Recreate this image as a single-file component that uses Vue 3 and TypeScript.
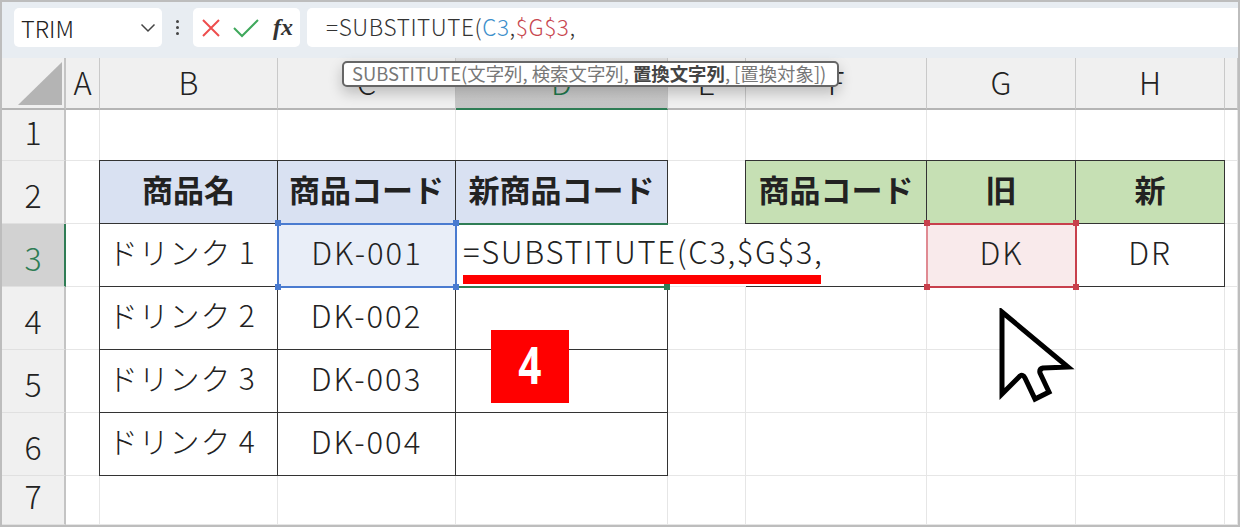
<script setup lang="ts">
const cols = ['A', 'B', 'C', 'D', 'E', 'F', 'G', 'H', '']

type Cell = { t?: string; c?: string }
const empty = (): Cell[] => Array.from({ length: 9 }, () => ({}))
const rows: { n: number; cells: Cell[] }[] = [
  { n: 1, cells: empty() },
  {
    n: 2,
    cells: [
      {},
      { t: '商品名', c: 'tb hb' },
      { t: '商品コード', c: 'tb hb' },
      { t: '新商品コード', c: 'tb hb' },
      {},
      { t: '商品コード', c: 'tb hg' },
      { t: '旧', c: 'tb hg' },
      { t: '新', c: 'tb hg' },
      {},
    ],
  },
  {
    n: 3,
    cells: [
      {},
      { t: 'ドリンク 1', c: 'tb item' },
      { t: 'DK-001', c: 'tb sel-blue' },
      { c: 'editing' },
      { c: 'over' },
      { c: 'over-end' },
      { t: 'DK', c: 'tb sel-red' },
      { t: 'DR', c: 'tb' },
      {},
    ],
  },
  { n: 4, cells: [{}, { t: 'ドリンク 2', c: 'tb item' }, { t: 'DK-002', c: 'tb' }, { c: 'tb' }, {}, {}, {}, {}, {}] },
  { n: 5, cells: [{}, { t: 'ドリンク 3', c: 'tb item' }, { t: 'DK-003', c: 'tb' }, { c: 'tb' }, {}, {}, {}, {}, {}] },
  { n: 6, cells: [{}, { t: 'ドリンク 4', c: 'tb item' }, { t: 'DK-004', c: 'tb' }, { c: 'tb' }, {}, {}, {}, {}, {}] },
  { n: 7, cells: empty() },
]
</script>

<template>
  <div class="frame">
    <header class="fbar">
      <div class="namebox">
        <span class="name">TRIM</span>
        <svg class="chev" width="16" height="10" viewBox="0 0 16 10"><path d="M1.5 1.5 8 8l6.5-6.5" fill="none" stroke="#444" stroke-width="1.5" /></svg>
      </div>
      <div class="dots"><i></i><i></i><i></i></div>
      <div class="fxbox">
        <svg width="20" height="20" viewBox="0 0 20 20"><path d="M2 2l16 16M18 2 2 18" fill="none" stroke="#ee4d4d" stroke-width="2" /></svg>
        <svg width="26" height="20" viewBox="0 0 26 20"><path d="M1 10l8 8L25 2" fill="none" stroke="#3fa85c" stroke-width="2" /></svg>
        <span class="fx">fx</span>
      </div>
      <div class="finput">=SUBSTITUTE(<span class="blue">C3</span>,<span class="red">$G$3</span>,</div>
    </header>

    <div class="sheet">
      <div class="corner"><span class="tri"></span></div>
      <div v-for="c in cols" :key="c" class="colh" :class="{ active: c === 'D' }">{{ c }}</div>

      <template v-for="r in rows" :key="r.n">
        <div class="rowh" :class="{ active: r.n === 3 }">{{ r.n }}</div>
        <div v-for="(cell, i) in r.cells" :key="i" class="cell" :class="cell.c">
          <span v-if="cell.t">{{ cell.t }}</span>
          <template v-if="cell.c === 'editing'">
            <span class="editor">=SUBSTITUTE(C3,$G$3,</span>
            <b class="underline"></b>
          </template>
        </div>
      </template>

      <div class="tip">SUBSTITUTE(文字列, 検索文字列, <b>置換文字列</b>, [置換対象])</div>
      <div class="badge"><span>4</span></div>
      <svg class="cursor" width="80" height="96" viewBox="0 0 80 96">
        <path d="M4 4 70 59 45 60Q41 61 42 65L51 84 37 91 27 70Q25 66 22 68L4 86Z" fill="#fff" stroke="#000" stroke-width="5" stroke-linejoin="miter" />
      </svg>
      <span class="h hb1"></span><span class="h hb2"></span><span class="h hb3"></span><span class="h hb4"></span>
      <span class="h hr1"></span><span class="h hr2"></span><span class="h hr3"></span><span class="h hr4"></span>
      <span class="h hg1"></span>
    </div>
  </div>
</template>

<style>
html, body { margin: 0; background: #fff; }
</style>

<style scoped>
.frame {
  width: 1240px;
  height: 527px;
  box-sizing: border-box;
  border: 2px solid #bdbdbd;
  display: flex;
  flex-direction: column;
  overflow: hidden;
  font-family: "Noto Sans CJK JP", "Noto Sans", sans-serif;
  color: #222;
  background: #fff;
}
.fbar {
  height: 56px;
  flex: none;
  background: #e8edf2;
  display: flex;
  align-items: flex-start;
  padding: 6px 0 0 12px;
  box-sizing: border-box;
}
.namebox {
  width: 148px;
  height: 39px;
  background: #fff;
  border-radius: 5px;
  display: flex;
  align-items: center;
  justify-content: space-between;
  padding: 0 6px 0 7px;
  box-sizing: border-box;
}
.name { font-size: 23.5px; font-weight: 300; }
.dots {
  width: 31px;
  height: 39px;
  display: flex;
  flex-direction: column;
  align-items: center;
  justify-content: center;
  gap: 3px;
}
.dots i { width: 3px; height: 3px; background: #444; border-radius: 50%; }
.fxbox {
  width: 107px;
  height: 39px;
  background: #fff;
  border-radius: 5px;
  display: flex;
  align-items: center;
  gap: 12px;
  padding-left: 8px;
  box-sizing: border-box;
}
.fx {
  font-family: "Liberation Serif", serif;
  font-style: italic;
  font-weight: 700;
  font-size: 24px;
  color: #333;
  margin-left: 2px;
}
.finput {
  margin-left: 7px;
  flex: 1;
  height: 39px;
  background: #fff;
  border-radius: 5px 0 0 5px;
  padding-left: 19px;
  font-size: 22.5px;
  letter-spacing: 0.6px;
  line-height: 37px;
  font-weight: 300;
  color: #333;
  white-space: nowrap;
}
.blue { color: #3d8fcb; }
.red { color: #c8474f; }

.sheet {
  position: relative;
  flex: 1;
  display: grid;
  grid-template-columns: 64px 34px 178px 178px 212px 78px 181px 149px 149px 13px;
  grid-template-rows: 52px 51px 63px 63px 63px 63px 63px 49px;
}
.corner {
  background: #f0f0f0;
  border-right: 2px solid #c4c4c4;
  border-bottom: 2px solid #b5b5b5;
  box-sizing: border-box;
  position: relative;
}
.tri {
  position: absolute;
  left: 16px;
  top: 4px;
  width: 44px;
  height: 43px;
  background: #b4b4b4;
  clip-path: polygon(100% 0, 100% 100%, 0 100%);
}
.colh {
  background: #f0f0f0;
  border-right: 1px solid #c9c9c9;
  border-bottom: 2px solid #b5b5b5;
  box-sizing: border-box;
  display: flex;
  align-items: center;
  justify-content: center;
  padding-bottom: 4px;
  font-size: 31px;
  font-weight: 300;
  color: #222;
}
.colh.active {
  background: linear-gradient(#e2e2e2, #c4c4c4);
  border-bottom: 2px solid #2f7d55;
  color: #1f7a4d;
}
.rowh {
  background: #f0f0f0;
  border-right: 2px solid #c4c4c4;
  border-bottom: 1px solid #e0e0e0;
  box-sizing: border-box;
  display: flex;
  align-items: flex-end;
  justify-content: center;
  padding-bottom: 13px;
  font-size: 32px;
  line-height: 1;
  font-weight: 300;
}
.rowh.active {
  background: #d2d2d2;
  color: #2f7d55;
  border-right: 2px solid #2f7d55;
}
.cell {
  border-right: 1px solid #e6e6e6;
  border-bottom: 1px solid #e6e6e6;
  box-sizing: border-box;
  display: flex;
  align-items: center;
  justify-content: center;
  padding-bottom: 8px;
  font-size: 31px;
  letter-spacing: 2px;
  font-weight: 300;
  color: #222;
  min-width: 0;
  white-space: nowrap;
}
.tb {
  border: 1px solid #333;
  margin: -1px 0 0 -1px;
  background: #fff;
  position: relative;
}
.hb { background: #d9e1f2; font-weight: 700; letter-spacing: 0; }
.hg { background: #c6e0b4; font-weight: 700; letter-spacing: 0; }
.item { justify-content: flex-start; padding-left: 8px; font-size: 30px; letter-spacing: 0.8px; }
.sel-blue {
  background: #e9eef8;
  border: 2px solid #4a7bd0;
  margin: -1px;
  z-index: 2;
}
.sel-red {
  background: #f9eaeb;
  border: 2px solid #c8404c;
  border-left-color: #e08a92;
  margin: -1px;
  z-index: 2;
}
.editing {
  border: 0;
  border-top: 2px solid #2f7d55;
  border-bottom: 2px solid #2f7d55;
  margin: -1px 0;
  background: #fff;
  position: relative;
  z-index: 1;
  padding: 0;
}
.editor {
  position: absolute;
  left: 7px;
  top: 3px;
  line-height: 46px;
  font-size: 31px;
  letter-spacing: 1.65px;
  color: #222;
}
.underline {
  position: absolute;
  left: 7px;
  top: 50px;
  width: 358px;
  height: 9px;
  background: #ff0000;
  z-index: 2;
}
.over { border-right: 0; background: #fff; }
.over-end { border-right: 0; border-bottom: 1px solid #333; background: #fff; }

.tip {
  position: absolute;
  left: 340px;
  top: 3px;
  width: 497px;
  height: 26px;
  box-sizing: border-box;
  background: #fff;
  border: 2px solid #666;
  border-radius: 5px;
  padding-left: 8px;
  font-size: 18.4px;
  line-height: 20px;
  font-weight: 400;
  color: #777;
  white-space: nowrap;
  box-shadow: 0 6px 14px rgba(0, 0, 0, 0.22);
  z-index: 5;
}
.tip b { color: #444; font-weight: 700; }
.badge {
  position: absolute;
  left: 489px;
  top: 272px;
  width: 78px;
  height: 73px;
  background: #ff0000;
  color: #fff;
  font-size: 52px;
  line-height: 1;
  font-weight: 700;
  font-family: "Noto Sans", sans-serif;
  display: flex;
  align-items: center;
  justify-content: center;
  padding-bottom: 5px;
  box-sizing: border-box;
  z-index: 4;
}
.badge span { display: block; transform: scaleX(0.78); }
.cursor { position: absolute; left: 996px; top: 250px; z-index: 4; }
.h { position: absolute; width: 6px; height: 6px; z-index: 6; }
.hb1, .hb2, .hb3, .hb4 { background: #4a7bd0; }
.hb1 { left: 273px; top: 162px; }
.hb2 { left: 451px; top: 162px; }
.hb3 { left: 273px; top: 226px; }
.hb4 { left: 451px; top: 226px; }
.hr1, .hr2, .hr3, .hr4 { background: #c8404c; }
.hr1 { left: 922px; top: 162px; }
.hr2 { left: 1071px; top: 162px; }
.hr3 { left: 922px; top: 226px; }
.hr4 { left: 1071px; top: 226px; }
.hg1 { left: 662px; top: 226px; background: #2f7d55; }
</style>
